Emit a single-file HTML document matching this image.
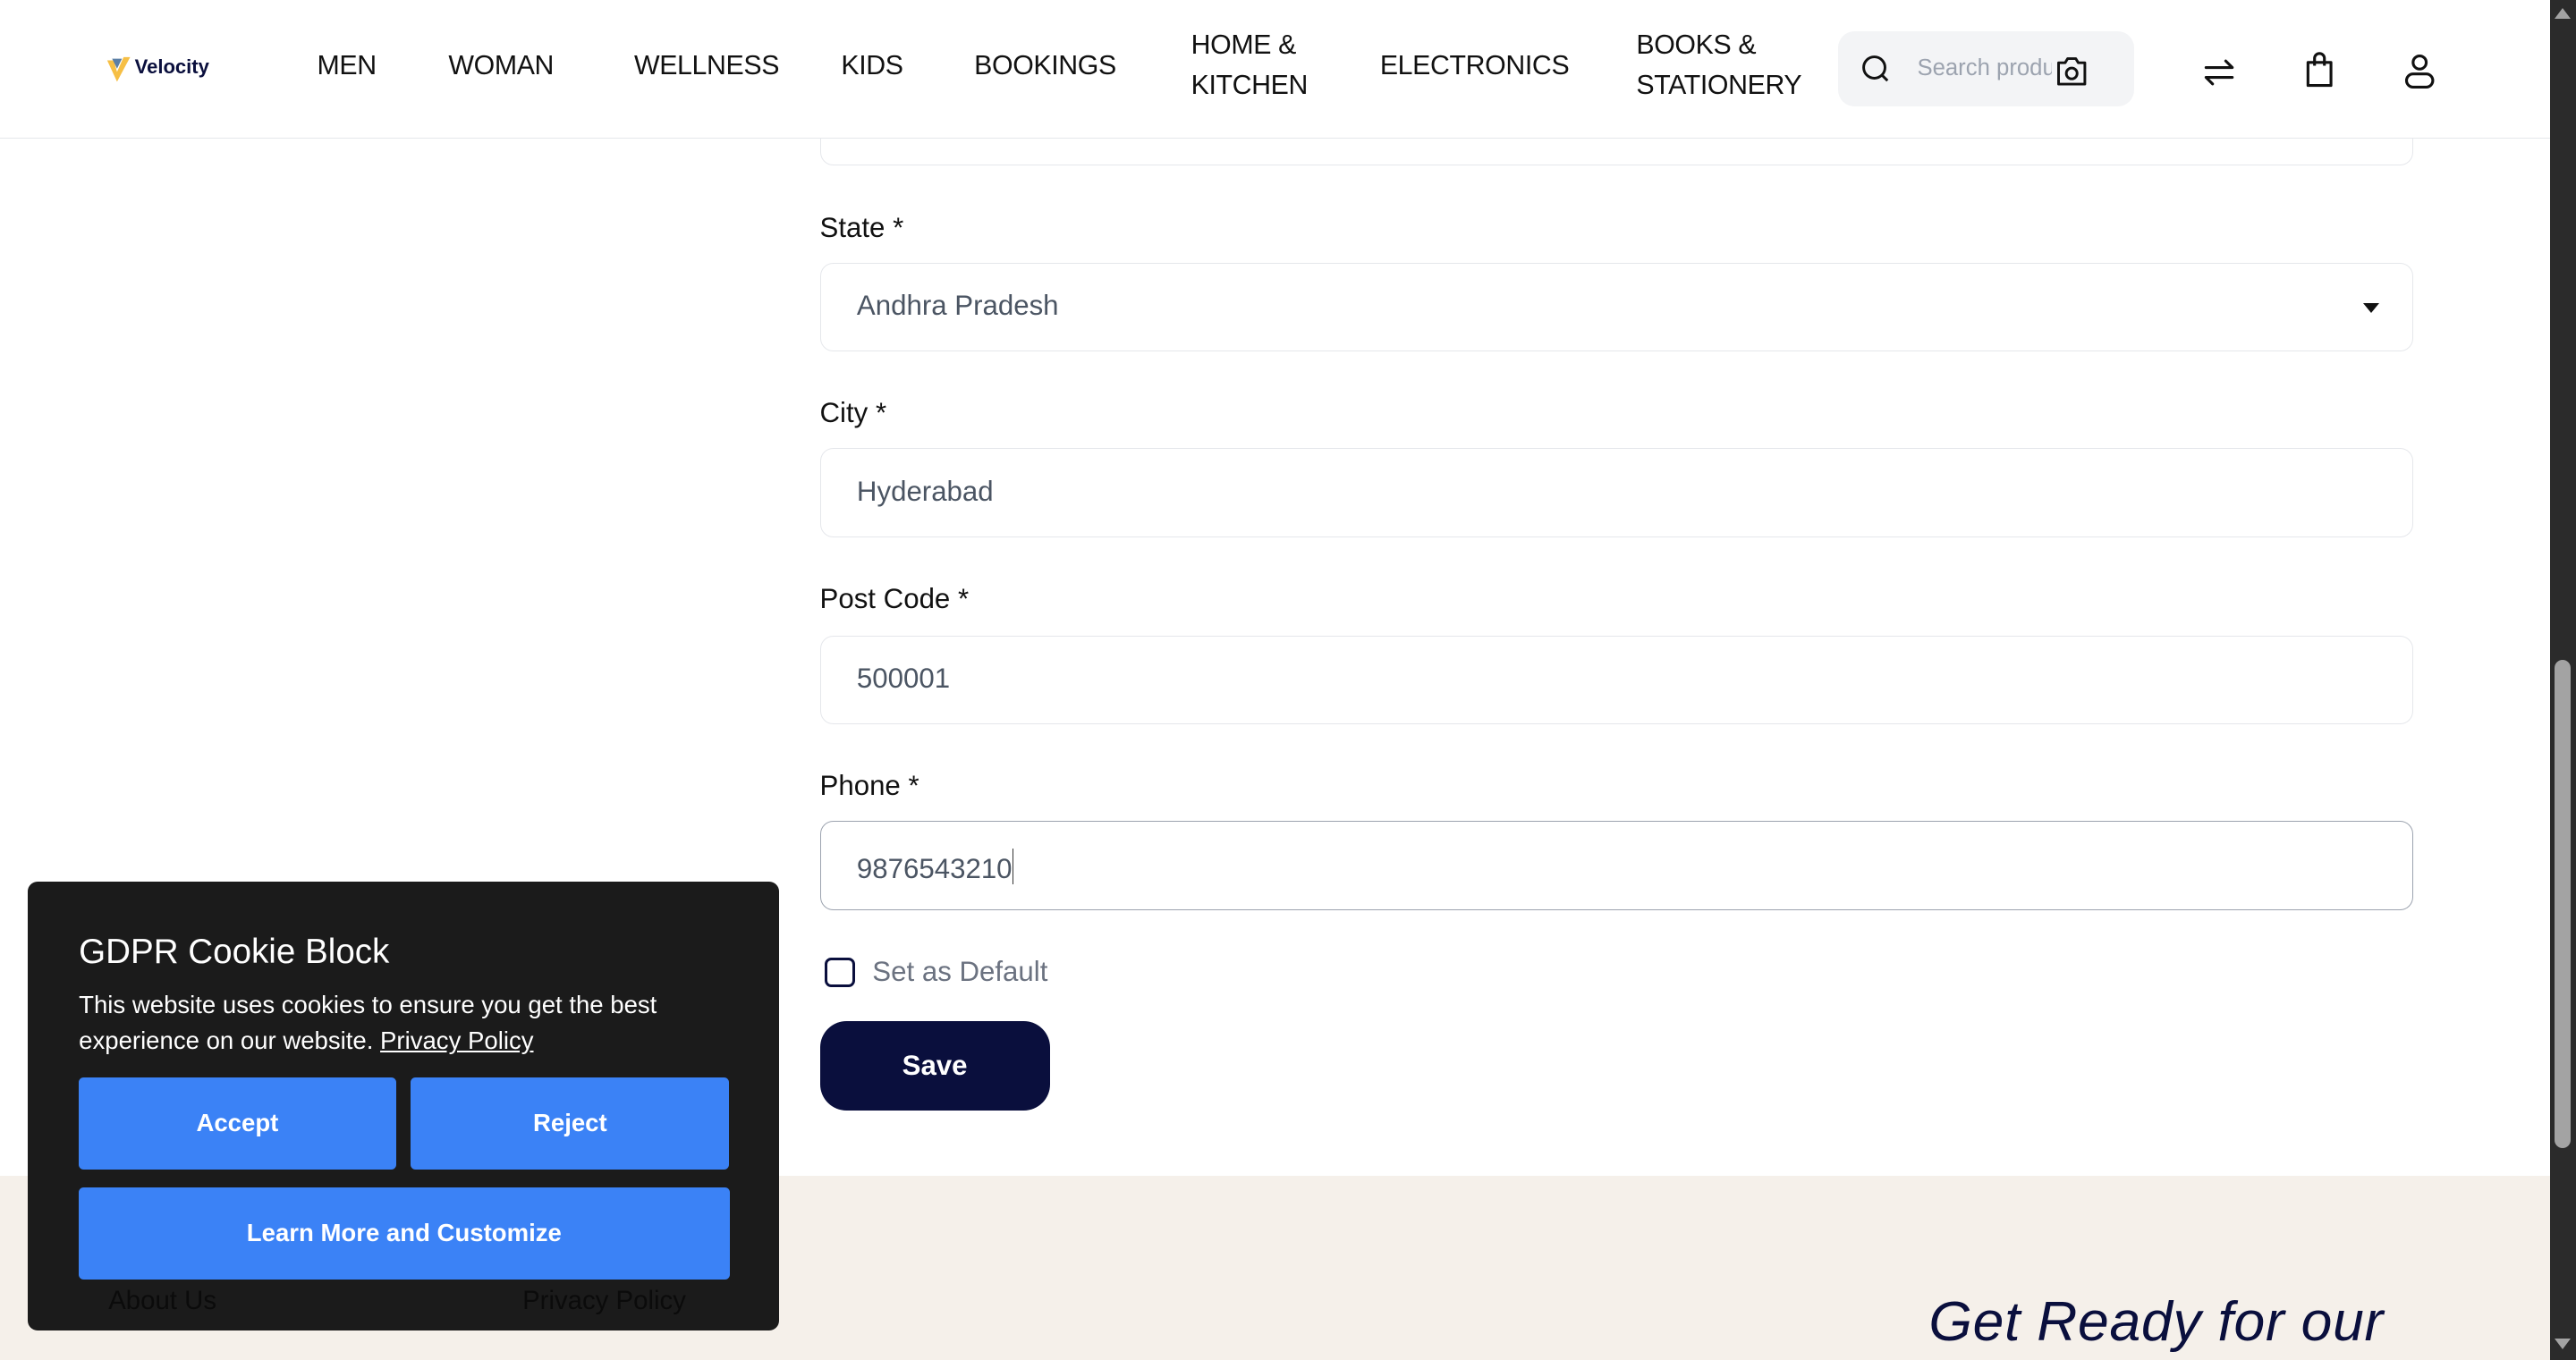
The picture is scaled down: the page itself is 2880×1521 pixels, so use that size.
<!DOCTYPE html>
<html><head><meta charset="utf-8">
<style>
html,body{margin:0;padding:0;overflow:hidden}
body{width:2880px;height:1520px;background:#fff;font-family:"Liberation Sans",sans-serif}
#r{position:absolute;left:0;top:0;width:1568px;height:828px;zoom:1.83673;overflow:hidden;background:#fff}
.a{position:absolute}
.nav{font-size:16.5px;color:#111;line-height:25px;letter-spacing:-0.2px}
.lbl{font-size:17px;color:#111}
.inp{position:absolute;left:499px;width:970px;height:54px;border:1px solid #e5e7eb;border-radius:8px;box-sizing:border-box;background:#fff}
.inp span{position:absolute;left:22px;top:16px;font-size:17px;color:#4b5563}
.btn{position:absolute;background:#3b82f6;color:#fff;font-weight:bold;font-size:15px;display:flex;align-items:center;justify-content:center;border-radius:3px}
</style></head><body>
<div id="r">
<!-- header -->
<div class="a" style="left:0;top:0;width:1552px;height:84px;border-bottom:1px solid #e5e7eb;background:#fff;z-index:2">
  <svg class="a" style="left:64px;top:34px" width="16" height="18" viewBox="0 0 16 18"><path d="M1 3 L7 16 L15 1 L11 1 L7 10 L5 3Z" fill="#f6bf45"/><path d="M4 2 L10 2 L7 8Z" fill="#5b7fa6"/></svg>
  <div class="a" style="left:82px;top:34px;font-size:12px;font-weight:bold;color:#0a0f3d">Velocity</div>
  <div class="a nav" style="left:193px;top:28px">MEN</div>
  <div class="a nav" style="left:273px;top:28px">WOMAN</div>
  <div class="a nav" style="left:386px;top:28px">WELLNESS</div>
  <div class="a nav" style="left:512px;top:28px">KIDS</div>
  <div class="a nav" style="left:593px;top:28px">BOOKINGS</div>
  <div class="a nav" style="left:725px;top:15px">HOME &amp;<br>KITCHEN</div>
  <div class="a nav" style="left:840px;top:28px">ELECTRONICS</div>
  <div class="a nav" style="left:996px;top:15px">BOOKS &amp;<br>STATIONERY</div>
  <div class="a" style="left:1119px;top:19px;width:180px;height:46px;background:#f3f4f6;border-radius:10px;overflow:hidden">
    <svg class="a" style="left:13px;top:13px" width="20" height="20" viewBox="0 0 20 20" fill="none" stroke="#111" stroke-width="1.6"><circle cx="9" cy="9" r="6.5"/><path d="M14 14 L17 17"/></svg>
    <div class="a" style="left:48px;top:15px;font-size:14px;color:#9ca3af;width:82px;overflow:hidden;white-space:nowrap">Search products</div>
    <svg class="a" style="left:131px;top:14px" width="22" height="20" viewBox="0 0 22 20" fill="none" stroke="#111" stroke-width="1.6"><path d="M3 5 H7 L8.5 2.5 H13.5 L15 5 H19 V18 H3Z" stroke-linejoin="round"/><circle cx="11" cy="11.5" r="3.3"/></svg>
  </div>
  <svg class="a" style="left:1339px;top:32px" width="24" height="24" viewBox="0 0 24 24" fill="none" stroke="#111" stroke-width="1.7" stroke-linecap="round" stroke-linejoin="round"><path d="M4 9 H20 L16 5"/><path d="M20 15 H4 L8 19"/></svg>
  <svg class="a" style="left:1401px;top:31px" width="22" height="24" viewBox="0 0 22 24" fill="none" stroke="#111" stroke-width="1.7" stroke-linejoin="round"><path d="M4 7 H18 V21 H4Z"/><path d="M8 9 V4.5 a3 3 0 0 1 6 0 V9"/></svg>
  <svg class="a" style="left:1462px;top:31px" width="22" height="24" viewBox="0 0 22 24" fill="none" stroke="#111" stroke-width="1.7"><circle cx="11" cy="7" r="4"/><rect x="3" y="14" width="16" height="8" rx="4"/></svg>
</div>
<!-- form -->
<div class="inp" style="top:47px"></div>
<div class="a lbl" style="left:499px;top:129px">State *</div>
<div class="inp" style="top:160px"><span>Andhra Pradesh</span><div class="a" style="right:20px;top:24px;width:0;height:0;border-left:5px solid transparent;border-right:5px solid transparent;border-top:6px solid #111"></div></div>
<div class="a lbl" style="left:499px;top:242px">City *</div>
<div class="inp" style="top:273px"><span>Hyderabad</span></div>
<div class="a lbl" style="left:499px;top:355px">Post Code *</div>
<div class="inp" style="top:387px"><span>500001</span></div>
<div class="a lbl" style="left:499px;top:469px">Phone *</div>
<div class="inp" style="top:500px;border-color:#9ca3af"><span>9876543210<b style="display:inline-block;width:1px;height:22px;background:#333;vertical-align:-4px;font-weight:normal"></b></span></div>
<div class="a" style="left:502px;top:583px;width:15px;height:15px;border:2px solid #0a0f3d;border-radius:4px"></div>
<div class="a" style="left:531px;top:582px;font-size:17px;color:#6b7280">Set as Default</div>
<div class="a" style="left:499px;top:622px;width:140px;height:54px;background:#0a0f3d;border-radius:16px;color:#fff;font-weight:bold;font-size:17px;display:flex;align-items:center;justify-content:center">Save</div>
<!-- footer -->
<div class="a" style="left:0;top:716px;width:1552px;height:112px;background:#f5f0ea"></div>
<div class="a" style="left:1174px;top:785px;font-size:34px;font-style:italic;color:#0a0f3d;white-space:nowrap;letter-spacing:0.4px">Get Ready for our</div>
<!-- cookie -->
<div class="a" style="left:17px;top:537px;width:457px;height:273px;background:#1b1b1b;border-radius:6px">
  <div class="a" style="left:31px;top:31px;font-size:21px;color:#fff">GDPR Cookie Block</div>
  <div class="a" style="left:31px;top:64px;font-size:15px;line-height:22px;color:#fff;width:400px">This website uses cookies to ensure you get the best experience on our website. <u>Privacy Policy</u></div>
  <div class="btn" style="left:31px;top:119px;width:193px;height:56px">Accept</div>
  <div class="btn" style="left:233px;top:119px;width:194px;height:56px">Reject</div>
  <div class="btn" style="left:31px;top:186px;width:396px;height:56px">Learn More and Customize</div>
  <div class="a" style="left:49px;top:246px;font-size:16px;color:#0b0b0b">About Us</div>
  <div class="a" style="left:301px;top:246px;font-size:16px;color:#0b0b0b">Privacy Policy</div>
</div>
<!-- scrollbar -->
<div class="a" style="left:1552px;top:0;width:16px;height:828px;background:#2b2b2b">
  <div class="a" style="left:3px;top:402px;width:10px;height:297px;background:#a3a3a3;border-radius:5px"></div>
  <div class="a" style="left:3px;top:5px;width:0;height:0;border-left:5px solid transparent;border-right:5px solid transparent;border-bottom:7px solid #a3a3a3"></div>
  <div class="a" style="left:3px;top:815px;width:0;height:0;border-left:5px solid transparent;border-right:5px solid transparent;border-top:7px solid #a3a3a3"></div>
</div>
</div>
</body></html>
